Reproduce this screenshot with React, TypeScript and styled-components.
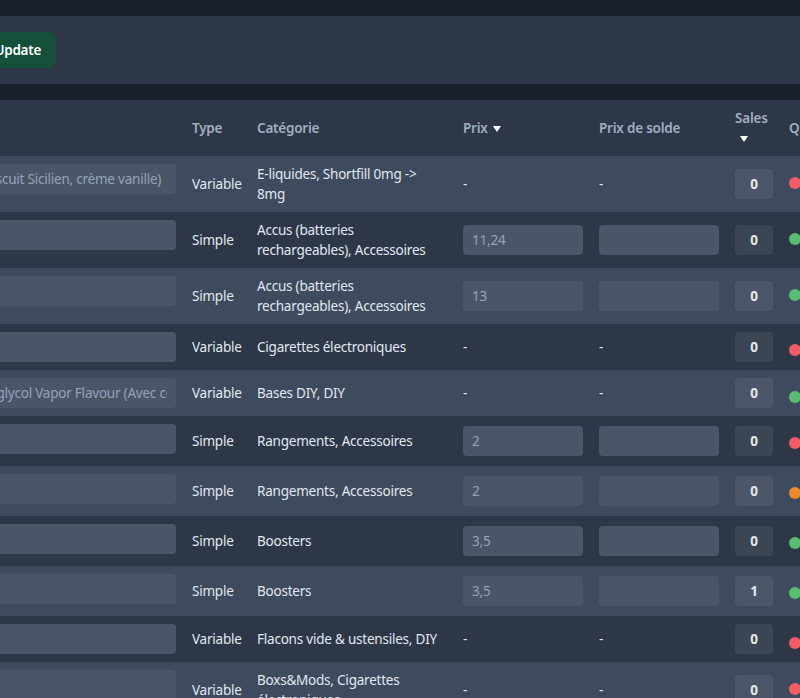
import React from 'react';
import styled, { createGlobalStyle } from 'styled-components';

const GlobalStyle = createGlobalStyle`
  html, body {
    margin: 0;
    height: 100%;
    overflow: hidden;
    background: #1a202c;
  }
  body {
    font-family: "Noto Sans", "Open Sans", sans-serif;
    font-size: 13.5px;
    line-height: 20px;
    letter-spacing: -0.22px;
    color: #e2e8f0;
  }
`;

const Page = styled.div`
  width: 800px;
  height: 698px;
  overflow: hidden;
  padding-top: 16px;
  box-sizing: border-box;
`;

const Toolbar = styled.div`
  display: flex;
  align-items: center;
  height: 68px;
  background: #2d3748;
  margin-bottom: 16px;
`;

const UpdateButton = styled.button`
  height: 36px;
  width: 100px;
  margin-left: -44px;
  padding: 0 15px 0 0;
  border: 0;
  border-radius: 8px;
  background: #14503a;
  color: #fff;
  font: inherit;
  font-weight: 600;
  letter-spacing: -0.3px;
  text-align: right;
`;

const Table = styled.table`
  width: 1100px;
  margin-left: -132px;
  table-layout: fixed;
  border-collapse: collapse;
`;

const HeadCell = styled.th<{ $width: number }>`
  width: ${p => p.$width}px;
  padding: 8px;
  box-sizing: border-box;
  background: #2d3748;
  color: #a0aec0;
  font-weight: 600;
  text-align: left;
  vertical-align: middle;
`;

const SortArrow = styled.span`
  display: inline-block;
  margin-left: 5px;
  vertical-align: 1px;
  border-style: solid;
  border-width: 6px 4px 0;
  border-color: #fff transparent transparent;
`;

const Row = styled.tr`
  background: #2d3748;
  &:nth-child(odd) {
    background: #3e4a5e;
  }
`;

const Cell = styled.td`
  padding: 8px;
  vertical-align: middle;
  overflow: hidden;
`;

const NameCell = styled(Cell)`
  vertical-align: top;
`;

const Field = styled.input`
  display: block;
  width: 100%;
  height: 30px;
  box-sizing: border-box;
  padding: 0 9px;
  border: 0;
  border-radius: 4px;
  background: #4a5568;
  color: #94a3b8;
  font: inherit;
  letter-spacing: inherit;
  outline: none;
`;

const PriceField = styled(Field)`
  margin: 2px 0;
`;

const SalesBox = styled.div`
  height: 30px;
  line-height: 30px;
  border-radius: 4px;
  background: rgba(255, 255, 255, 0.07);
  font-weight: 700;
  text-align: center;
`;

const StockDot = styled.span<{ $color: string; $shift: number }>`
  display: block;
  width: 12px;
  height: 12px;
  border-radius: 50%;
  background: ${p => p.$color};
  transform: translateY(${p => p.$shift}px);
`;

const RED = '#f05d67';
const GREEN = '#58bd72';
const ORANGE = '#ea8a2e';

type Product = {
  name: string;
  type: string;
  category: string;
  price: string | null;
  sale: boolean;
  sales: number;
  dot: string;
  shift: number;
};

const products: Product[] = [
  { name: 'Le Cannoli 50cl (Biscuit Sicilien, crème vanille)', type: 'Variable', category: 'E-liquides, Shortfill 0mg -> 8mg', price: null, sale: false, sales: 0, dot: RED, shift: -1 },
  { name: '', type: 'Simple', category: 'Accus (batteries rechargeables), Accessoires', price: '11,24', sale: true, sales: 0, dot: GREEN, shift: -1 },
  { name: '', type: 'Simple', category: 'Accus (batteries rechargeables), Accessoires', price: '13', sale: true, sales: 0, dot: GREEN, shift: -1 },
  { name: '', type: 'Variable', category: 'Cigarettes électroniques', price: null, sale: false, sales: 0, dot: RED, shift: 3 },
  { name: 'Bases - Propylène glycol Vapor Flavour (Avec colorant, 1 litre)', type: 'Variable', category: 'Bases DIY, DIY', price: null, sale: false, sales: 0, dot: GREEN, shift: 4 },
  { name: '', type: 'Simple', category: 'Rangements, Accessoires', price: '2', sale: true, sales: 0, dot: RED, shift: 2 },
  { name: '', type: 'Simple', category: 'Rangements, Accessoires', price: '2', sale: true, sales: 0, dot: ORANGE, shift: 2 },
  { name: '', type: 'Simple', category: 'Boosters', price: '3,5', sale: true, sales: 0, dot: GREEN, shift: 2 },
  { name: '', type: 'Simple', category: 'Boosters', price: '3,5', sale: true, sales: 1, dot: GREEN, shift: 2 },
  { name: '', type: 'Variable', category: 'Flacons vide & ustensiles, DIY', price: null, sale: false, sales: 0, dot: RED, shift: 4 },
  { name: '', type: 'Variable', category: 'Boxs&Mods, Cigarettes électroniques', price: null, sale: false, sales: 0, dot: RED, shift: -1 },
];

export default function App() {
  return (
    <Page>
      <GlobalStyle />
      <Toolbar>
        <UpdateButton type="button">Update</UpdateButton>
      </Toolbar>
      <Table>
        <thead>
          <tr>
            <HeadCell $width={316}>Produit</HeadCell>
            <HeadCell $width={65}>Type</HeadCell>
            <HeadCell $width={206}>Catégorie</HeadCell>
            <HeadCell $width={136}>Prix<SortArrow /></HeadCell>
            <HeadCell $width={136}>Prix de solde</HeadCell>
            <HeadCell $width={54}>Sales<SortArrow /></HeadCell>
            <HeadCell $width={187}>Quantité</HeadCell>
          </tr>
        </thead>
        <tbody>
          {products.map((p, i) => (
            <Row key={i}>
              <NameCell><Field readOnly value={p.name} /></NameCell>
              <Cell>{p.type}</Cell>
              <Cell>{p.category}</Cell>
              <Cell>{p.price !== null ? <PriceField readOnly value={p.price} /> : '-'}</Cell>
              <Cell>{p.sale ? <PriceField readOnly value="" /> : '-'}</Cell>
              <Cell><SalesBox>{p.sales}</SalesBox></Cell>
              <Cell><StockDot $color={p.dot} $shift={p.shift} /></Cell>
            </Row>
          ))}
        </tbody>
      </Table>
    </Page>
  );
}
